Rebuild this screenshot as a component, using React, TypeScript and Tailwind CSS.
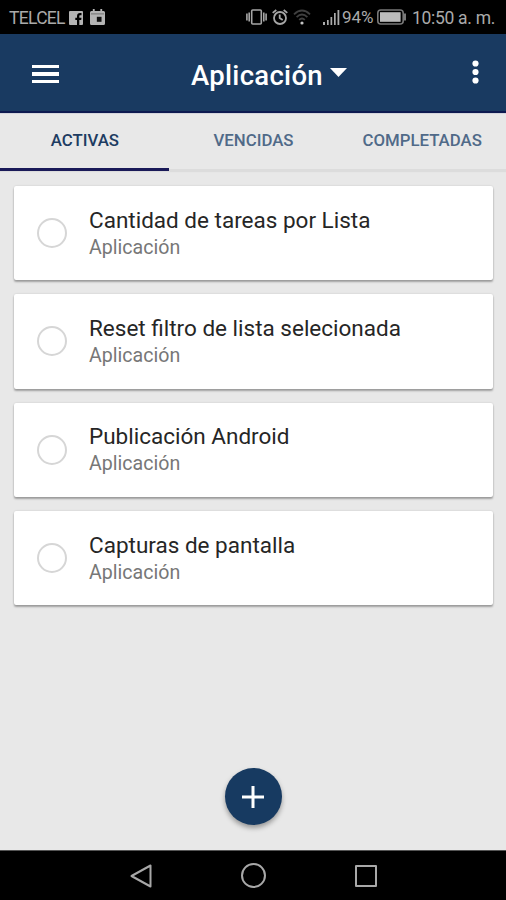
const tabs = [
  { id: "activas", label: "ACTIVAS", active: true },
  { id: "vencidas", label: "VENCIDAS", active: false },
  { id: "completadas", label: "COMPLETADAS", active: false },
];

const tasks = [
  { id: 1, title: "Cantidad de tareas por Lista", list: "Aplicación" },
  { id: 2, title: "Reset filtro de lista selecionada", list: "Aplicación" },
  { id: 3, title: "Publicación Android", list: "Aplicación" },
  { id: 4, title: "Capturas de pantalla", list: "Aplicación" },
];

function StatusBar() {
  return (
    <div className="flex h-[34px] items-center bg-black pl-[9px] pr-[11px] text-[#aaaaaa]">
      <span className="w-[60px] whitespace-nowrap pt-[2px] text-[17.5px] tracking-[-0.7px]">TELCEL</span>
      <svg className="mt-px h-[14px] w-[14px]" viewBox="0 0 14 14">
        <rect width="14" height="14" rx="1" fill="#b4b4b4" />
        <path d="M8 14V9H6.3V6.8H8V5.2C8 3.2 9.2 2.1 11 2.1h1.5v2.2h-1.2c-.8 0-1 .4-1 1v1.5h2.2L12.2 9h-1.9v5z" fill="#000" />
      </svg>
      <svg className="ml-[7px] h-4 w-[15px]" viewBox="0 0 16 16" preserveAspectRatio="none">
        <path d="M3 0h2v2h6V0h2v2h1.5A1.5 1.5 0 0 1 16 3.5v11a1.5 1.5 0 0 1-1.5 1.5h-13A1.5 1.5 0 0 1 0 14.500v-11A1.500 1.500 0 0 1 1.500 2H3z" fill="#b4b4b4" />
        <path d="M1 4.900h14" stroke="#666" strokeWidth="0.900" />
        <rect x="7.300" y="7.800" width="5" height="5" fill="#111" />
      </svg>
      <div className="ml-auto flex items-center">
        <svg className="h-4 w-[21px]" viewBox="0 0 21 16" fill="none" stroke="#a6a6a6" strokeWidth="1.600">
          <rect x="5.700" y="1" width="9.600" height="14" rx="1" />
          <path d="M3.200 3.500v9M.9 4.500v7M17.800 3.500v9M20.100 4.500v7" />
        </svg>
        <svg className="ml-[5px] h-4 w-4" viewBox="0 0 16 16" fill="none" stroke="#a6a6a6" strokeWidth="1.800">
          <circle cx="8" cy="9" r="6" />
          <path d="M.7 3.900 4.300 1M15.300 3.900 11.700 1M7.700 5.500V9l3 2" />
        </svg>
        <svg className="ml-[5px] h-4 w-[18px]" viewBox="0 0 18 16" fill="none" stroke="#404040" strokeWidth="1.800">
          <path d="M1 5.300Q9-2.200 17 5.300M3.600 8.100Q9 3 14.400 8.100M6.200 10.800Q9 8.200 11.800 10.800" />
          <circle cx="9" cy="14" r="1.600" fill="#c4c4c4" stroke="none" />
        </svg>
        <svg className="ml-3 h-4 w-[17px]" viewBox="0 0 17 16" fill="#aaaaaa">
          <path d="M0 13h2v3H0zM4 11h1.700v5H4zM7.500 8h1.700v8H7.500zM11 4h1.700v12H11zM14.500 1h1.800v15h-1.800z" />
        </svg>
        <span className="ml-[2px] w-[35px] whitespace-nowrap pt-px text-[17px] tracking-[-0.1px]">94%</span>
        <svg className="h-4 w-[29px]" viewBox="0 0 29 16" fill="none" stroke="#777">
          <rect x=".8" y="1" width="25.400" height="14" rx="3" strokeWidth="1.600" />
          <rect x="3" y="3.200" width="20.600" height="9.600" fill="#bcbcbc" stroke="none" />
          <path d="M28 4.500v7" stroke="#999" strokeWidth="1.600" />
        </svg>
        <span className="ml-[6px] w-[83px] whitespace-nowrap pt-[3px] text-[17.5px] tracking-[-0.3px]">10:50 a. m.</span>
      </div>
    </div>
  );
}

function Header() {
  return (
    <header className="flex h-[79px] items-center border-b-2 border-[#0d1a50] bg-[#193a61] pl-8 pr-[27px]">
      <div className="flex w-[27px] flex-col gap-1 pt-[3px]">
        <span className="h-[3.500px] bg-white" />
        <span className="h-[3.500px] bg-white" />
        <span className="h-[3.500px] bg-white" />
      </div>
      <div className="ml-[132px] flex items-center pt-[6px]">
        <h1 className="w-[139px] whitespace-nowrap pt-px text-[27.5px] font-medium leading-8 tracking-[0.3px] text-white">
          Aplicación
        </h1>
        <svg className="mb-[6px] h-[9px] w-[17px]" viewBox="0 0 17 9">
          <path d="M0 0h17L8.500 9z" fill="#fff" />
        </svg>
      </div>
      <svg className="ml-auto mb-[2px] h-[24px] w-[7px]" viewBox="0 0 7 24" fill="#fff">
        <circle cx="3.500" cy="3.500" r="3.100" />
        <circle cx="3.500" cy="12" r="3.100" />
        <circle cx="3.500" cy="20.500" r="3.100" />
      </svg>
    </header>
  );
}

function Tabs() {
  return (
    <nav className="grid h-[58px] grid-cols-3 border-t border-[#d4d4dc] text-[16.8px] font-medium shadow-[0_1px_1px_rgba(0,0,0,0.05)]">
      {tabs.map((tab) => (
        <div
          key={tab.id}
          className={
            tab.active
              ? "flex items-center justify-center border-b-[3px] border-[#1a1a58] pb-px pl-px text-[#1d3c62]"
              : "flex items-center justify-center border-b-2 border-[#dcdcdc] pb-[2px] pl-px text-[#506a88]"
          }
        >
          {tab.label}
        </div>
      ))}
    </nav>
  );
}

function TaskCard({ title, list }: { title: string; list: string }) {
  return (
    <li className="flex h-[94.300px] items-center rounded-[2px] bg-white pl-[23px] shadow-[0_2px_2px_rgba(0,0,0,0.3),0_0_2px_rgba(0,0,0,0.15)]">
      <span className="h-[30px] w-[30px] rounded-full border-2 border-[#d6d6d6]" />
      <div className="ml-[22px] pt-[2.400px]">
        <p className="text-[22.5px] leading-[27px] text-[#262626]">{title}</p>
        <p className="text-[19.600px] leading-[28px] text-[#777777]">{list}</p>
      </div>
    </li>
  );
}

export default function App() {
  return (
    <div className="flex h-[900px] w-[506px] flex-col overflow-hidden bg-[#e8e8e8] font-[Roboto,sans-serif]">
      <StatusBar />
      <Header />
      <Tabs />
      <ul className="flex flex-col gap-[14px] pl-[14px] pr-[13px] pt-[15px]">
        {tasks.map((task) => (
          <TaskCard key={task.id} title={task.title} list={task.list} />
        ))}
      </ul>
      <div className="mb-[25px] mt-auto flex justify-center">
        <button className="flex h-[57px] w-[57px] items-center justify-center rounded-full bg-[#173a61] shadow-[0_3px_5px_rgba(0,0,0,0.35)]">
          <svg className="h-[22px] w-[22px]" viewBox="0 0 22 22" stroke="#fff" strokeWidth="3">
            <path d="M11 0v22M0 11h22" />
          </svg>
        </button>
      </div>
      <footer className="flex h-[50px] shrink-0 items-center border-t border-[#555] bg-black pl-[130px]">
        <svg className="h-6 w-[22px]" viewBox="0 0 22 24" fill="none" stroke="#a8a8a8" strokeWidth="2">
          <path d="M20.500 1.500v21L1.500 12z" strokeLinejoin="round" />
        </svg>
        <span className="ml-[89px] h-[25px] w-[25px] rounded-full border-2 border-[#a8a8a8]" />
        <span className="ml-[89px] h-[22px] w-[22px] rounded-[1px] border-2 border-[#a8a8a8]" />
      </footer>
    </div>
  );
}
